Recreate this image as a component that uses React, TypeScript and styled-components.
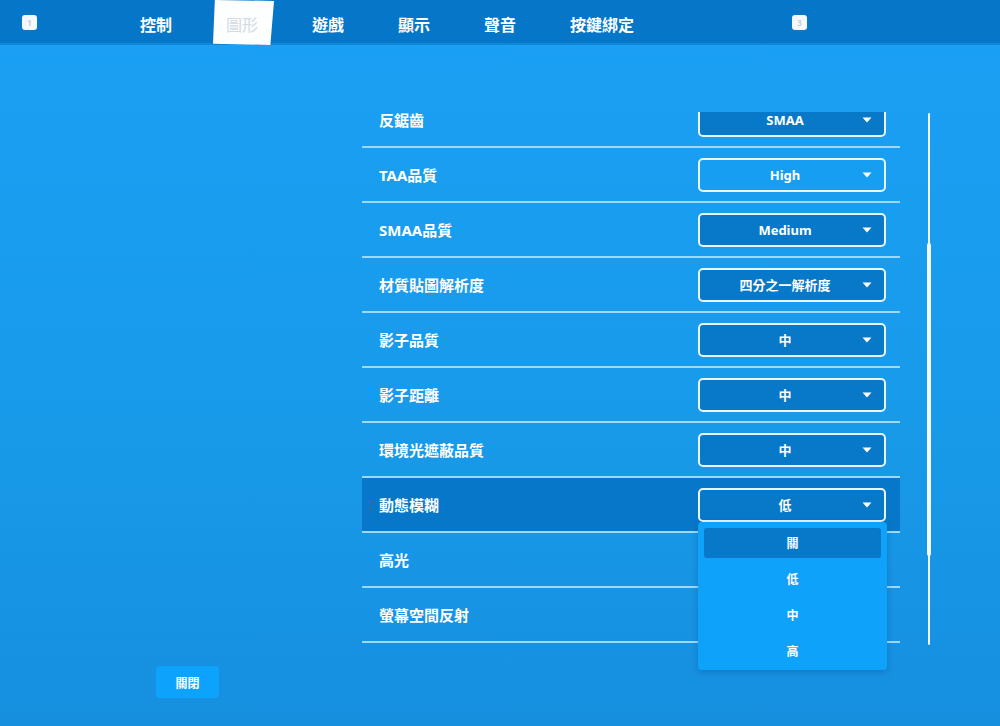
import React from "react";
import styled, { createGlobalStyle } from "styled-components";

const Global = createGlobalStyle`
  html, body { margin: 0; padding: 0; }
  body {
    width: 1000px;
    height: 726px;
    overflow: hidden;
    font-family: "Noto Sans", "Noto Sans CJK TC", sans-serif;
    -webkit-font-smoothing: antialiased;
  }
`;

const Page = styled.div`
  width: 1000px;
  height: 726px;
  display: flex;
  flex-direction: column;
  background: linear-gradient(180deg, #1aa0f5 0%, #189ae9 60%, #168fdf 100%);
  color: #fff;
`;

const TopBar = styled.header`
  height: 45px;
  flex: none;
  display: flex;
  align-items: center;
  padding-left: 22px;
  background: #0677c8;
  border-bottom: 2px solid #0f86d6;
  box-sizing: border-box;
`;

const KeyBadge = styled.span<{ $gap?: number }>`
  width: 15px;
  height: 15px;
  border-radius: 3px;
  background: #f4f8fb;
  color: #c9ccd0;
  font: 700 8px "Noto Sans", sans-serif;
  display: flex;
  align-items: center;
  justify-content: center;
  margin-left: ${(p) => p.$gap ?? 0}px;
  margin-top: 1px;
`;

const Tabs = styled.nav`
  display: flex;
  gap: 54px;
  margin-left: 103px;
  height: 100%;
  align-items: stretch;
`;

const Tab = styled.span<{ $active?: boolean }>`
  position: relative;
  isolation: isolate;
  font: 700 16px "Noto Sans CJK TC", sans-serif;
  padding-top: 4px;
  display: flex;
  align-items: center;
  color: ${(p) => (p.$active ? "#d3dae2" : "#fff")};
  font-weight: ${(p) => (p.$active ? 400 : 700)};
  &::before {
    content: "";
    display: ${(p) => (p.$active ? "block" : "none")};
    position: absolute;
    z-index: -1;
    top: 0;
    bottom: -2px;
    left: -13px;
    right: -16px;
    background: #fdfefe;
    clip-path: polygon(3% 0, 100% 2%, 94% 100%, 0 97%);
  }
`;

const Body = styled.main`
  flex: 1;
  display: flex;
`;

const LeftCol = styled.aside`
  width: 362px;
  flex: none;
  display: flex;
  flex-direction: column;
  justify-content: flex-end;
  padding: 0 0 28px 156px;
  box-sizing: border-box;
`;

const CloseButton = styled.button`
  width: 63px;
  height: 32px;
  border: none;
  border-radius: 4px;
  background: #0da3fd;
  color: #fff;
  font: 700 12px "Noto Sans CJK TC", sans-serif;
  padding: 0;
`;

const ListCol = styled.section`
  width: 538px;
  flex: none;
  padding-top: 67px;
`;

const Viewport = styled.div`
  display: flow-root;
  height: 531px;
  clip-path: inset(0 -200px -200px -200px);
`;

const List = styled.ul`
  list-style: none;
  margin: -19px 0 0 0;
  padding: 0;
`;

const Row = styled.li<{ $active?: boolean }>`
  height: 53px;
  border-bottom: 2px solid #9cd9ff;
  display: flex;
  align-items: center;
  justify-content: space-between;
  padding: 0 14px 0 17px;
  background: ${(p) => (p.$active ? "#0778c9" : "transparent")};
`;

const Label = styled.span`
  font: 700 15px "Noto Sans", "Noto Sans CJK TC", sans-serif;
  color: #fff;
`;

const SelectWrap = styled.div`
  position: relative;
`;

const Select = styled.div<{ $light?: boolean }>`
  width: 188px;
  height: 34px;
  box-sizing: border-box;
  border: 2px solid #e8f5ff;
  border-radius: 5px;
  background: ${(p) => (p.$light ? "#169ef2" : "#0878c8")};
  display: flex;
  align-items: center;
  justify-content: center;
  padding-right: 14px;
  position: relative;
  font: 700 13px "Noto Sans", "Noto Sans CJK TC", sans-serif;
  color: #fff;
`;

const Caret = styled.svg`
  position: absolute;
  right: 12px;
  top: 50%;
  margin-top: -3px;
`;

const Menu = styled.ul`
  position: absolute;
  z-index: 5;
  top: 34px;
  left: 0;
  width: 189px;
  box-sizing: border-box;
  margin: 0;
  list-style: none;
  padding: 6px 6px 4px;
  background: #0fa2fa;
  border-radius: 4px;
  box-shadow: 0 2px 6px rgba(0, 40, 90, 0.25);
  display: flex;
  flex-direction: column;
  gap: 6px;
`;

const MenuItem = styled.li<{ $active?: boolean }>`
  height: 30px;
  border-radius: 3px;
  background: ${(p) => (p.$active ? "#0878c8" : "transparent")};
  display: flex;
  align-items: center;
  justify-content: center;
  font: 700 12px "Noto Sans CJK TC", sans-serif;
  color: #fff;
`;

const ScrollCol = styled.div`
  margin-left: 27px;
  padding-top: 68px;
`;

const Track = styled.div`
  width: 2px;
  height: 532px;
  margin-left: 1px;
  background: #f2faff;
  border-radius: 1px;
  display: flex;
  flex-direction: column;
  align-items: center;
  padding-top: 130px;
  box-sizing: border-box;
`;

const Thumb = styled.div`
  width: 4px;
  height: 313px;
  flex: none;
  border-radius: 2px;
  background: #f2faff;
`;

type Setting = { label: string; value: string; light?: boolean; open?: boolean };

const settings: Setting[] = [
  { label: "反鋸齒", value: "SMAA" },
  { label: "TAA品質", value: "High", light: true },
  { label: "SMAA品質", value: "Medium" },
  { label: "材質貼圖解析度", value: "四分之一解析度" },
  { label: "影子品質", value: "中" },
  { label: "影子距離", value: "中" },
  { label: "環境光遮蔽品質", value: "中" },
  { label: "動態模糊", value: "低", open: true },
  { label: "高光", value: "" },
  { label: "螢幕空間反射", value: "" },
];

const options = ["關", "低", "中", "高"];

function CaretIcon() {
  return (
    <Caret width="10" height="6" viewBox="0 0 10 6">
      <path d="M0.5 0.5 H9.5 L5 5.5 Z" fill="#fff" />
    </Caret>
  );
}

export default function App() {
  return (
    <>
      <Global />
      <Page>
        <TopBar>
          <KeyBadge>1</KeyBadge>
          <Tabs>
            <Tab>控制</Tab>
            <Tab $active>圖形</Tab>
            <Tab>遊戲</Tab>
            <Tab>顯示</Tab>
            <Tab>聲音</Tab>
            <Tab>按鍵綁定</Tab>
          </Tabs>
          <KeyBadge $gap={158}>3</KeyBadge>
        </TopBar>
        <Body>
          <LeftCol>
            <CloseButton>關閉</CloseButton>
          </LeftCol>
          <ListCol>
            <Viewport>
              <List>
                {settings.map((s) => (
                  <Row key={s.label} $active={s.open}>
                    <Label>{s.label}</Label>
                    {s.value && (
                      <SelectWrap>
                        <Select $light={s.light}>
                          {s.value}
                          <CaretIcon />
                        </Select>
                        {s.open && (
                          <Menu>
                            {options.map((o, i) => (
                              <MenuItem key={o} $active={i === 0}>
                                {o}
                              </MenuItem>
                            ))}
                          </Menu>
                        )}
                      </SelectWrap>
                    )}
                  </Row>
                ))}
              </List>
            </Viewport>
          </ListCol>
          <ScrollCol>
            <Track>
              <Thumb />
            </Track>
          </ScrollCol>
        </Body>
      </Page>
    </>
  );
}
